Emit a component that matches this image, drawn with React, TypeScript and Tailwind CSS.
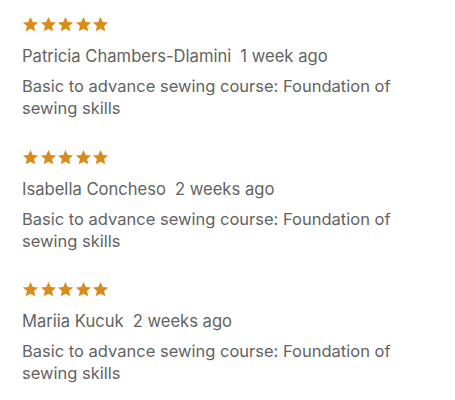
const reviews = [
  { name: 'Patricia Chambers-Dlamini', when: '1 week ago' },
  { name: 'Isabella Concheso', when: '2 weeks ago' },
  { name: 'Mariia Kucuk', when: '2 weeks ago' },
];

function Star() {
  return (
    <svg viewBox="0 0 24 24" className="w-[17px] h-[17px]" fill="#d98c1c">
      <path d="M12 1.5l3.2 6.9 7.5.7-5.7 5.1 1.7 7.5L12 17.9l-6.7 3.8 1.7-7.5-5.7-5.1 7.5-.7z" />
    </svg>
  );
}

export default function App() {
  return (
    <div className="bg-white w-[455px] h-[400px] px-[22px] pt-[16px] text-[#636363] font-['Inter','Liberation_Sans',sans-serif]">
      {reviews.map((r) => (
        <div key={r.name} className="h-[132.5px]">
          <div className="flex gap-[0.5px]">
            {[0, 1, 2, 3, 4].map((i) => (
              <Star key={i} />
            ))}
          </div>
          <p className="mt-[12px] text-[16.6px] leading-[22px]">
            {r.name}
            <span className="ml-[9px]">{r.when}</span>
          </p>
          <p className="mt-[8px] text-[16.5px] leading-[22px] w-[390px]">
            Basic to advance sewing course: Foundation of sewing skills
          </p>
        </div>
      ))}
    </div>
  );
}
